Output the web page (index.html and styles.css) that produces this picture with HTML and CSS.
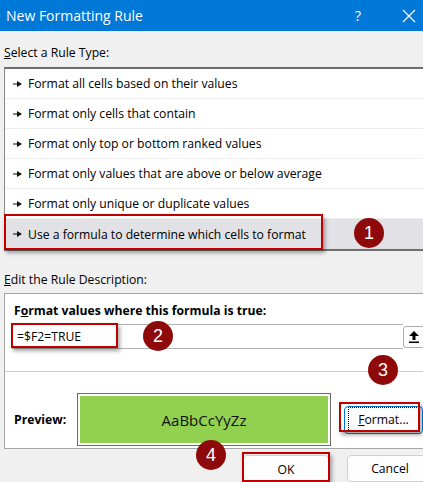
FILE: index.html
```html
<!DOCTYPE html>
<html>
<head>
<meta charset="utf-8">
<link rel="stylesheet" href="styles.css">
</head>
<body>
<div class="dialog">
  <div class="titlebar">
    <span class="title">New Formatting Rule</span>
    <span class="help">?</span>
    <svg class="close" width="14" height="14" viewBox="0 0 14 14"><path d="M1 1L13 13M13 1L1 13" stroke="#fff" stroke-width="1.2" fill="none"/></svg>
  </div>
  <div class="content">
    <div class="label"><u>S</u>elect a Rule Type:</div>
    <div class="listbox">
      <div class="row"><svg class="ptr" width="9" height="6" viewBox="0 0 9 6"><path d="M0 2.5H4V0L9 3L4 6V3.5H0Z" fill="#111"/></svg>Format all cells based on their values</div>
      <div class="row"><svg class="ptr" width="9" height="6" viewBox="0 0 9 6"><path d="M0 2.5H4V0L9 3L4 6V3.5H0Z" fill="#111"/></svg>Format only cells that contain</div>
      <div class="row"><svg class="ptr" width="9" height="6" viewBox="0 0 9 6"><path d="M0 2.5H4V0L9 3L4 6V3.5H0Z" fill="#111"/></svg>Format only top or bottom ranked values</div>
      <div class="row"><svg class="ptr" width="9" height="6" viewBox="0 0 9 6"><path d="M0 2.5H4V0L9 3L4 6V3.5H0Z" fill="#111"/></svg>Format only values that are above or below average</div>
      <div class="row"><svg class="ptr" width="9" height="6" viewBox="0 0 9 6"><path d="M0 2.5H4V0L9 3L4 6V3.5H0Z" fill="#111"/></svg>Format only unique or duplicate values</div>
      <div class="row selected"><svg class="ptr" width="9" height="6" viewBox="0 0 9 6"><path d="M0 2.5H4V0L9 3L4 6V3.5H0Z" fill="#111"/></svg>Use a formula to determine which cells to format</div>
    </div>
    <div class="label label2"><u>E</u>dit the Rule Description:</div>
    <div class="descbox">
      <div class="boldlabel">F<u>o</u>rmat values where this formula is true:</div>
      <div class="formula-row">
        <div class="formula">=$F2=TRUE</div>
        <div class="upbtn"><svg width="10" height="12" viewBox="0 0 10 12"><path d="M5 0L10 5H6.5V9H3.5V5H0Z" fill="#000"/><rect x="0" y="10.5" width="10" height="1.5" fill="#000"/></svg></div>
      </div>
      <div class="sep"></div>
      <div class="preview-row">
        <div class="boldlabel plabel">Preview:</div>
        <div class="preview"><div class="swatch">AaBbCcYyZz</div></div>
        <div class="btn fmtbtn"><span class="focus"><u>F</u>ormat...</span></div>
      </div>
    </div>
    <div class="buttons">
      <div class="btn okbtn">OK</div>
      <div class="btn cancelbtn">Cancel</div>
    </div>
  </div>

  <div class="mark box1"></div>
  <div class="mark box2"></div>
  <div class="mark box3"></div>
  <div class="mark box4"></div>
  <div class="num n1">1</div>
  <div class="num n2">2</div>
  <div class="num n3">3</div>
  <div class="num n4">4</div>
</div>
</body>
</html>
```

FILE: styles.css
```css
html, body {
  margin: 0;
  padding: 0;
  overflow: hidden;
  background: #f0f0f0;
}
body {
  width: 423px;
  height: 482px;
}
.dialog {
  position: relative;
  width: 440px;
  height: 482px;
  font-family: "Segoe UI", "Open Sans", "Noto Sans", sans-serif;
  font-size: 12.2px;
  color: #000;
}
.titlebar {
  height: 31px;
  background: #0078d7;
  color: #fff;
  display: flex;
  align-items: center;
  padding-left: 6px;
}
.title {
  font-size: 14px;
  flex: 0 0 auto;
  width: 349px;
}
.help {
  font-size: 14px;
  width: 47px;
}
.close {
  display: block;
}
.content {
  padding-left: 4px;
}
.label {
  height: 16px;
  line-height: 16px;
  margin-top: 14px;
  margin-bottom: 6px;
}
.label2 {
  margin-top: 21px;
  margin-bottom: 5px;
}
.listbox {
  background: #fff;
  border-top: 2px solid #6e6e6e;
  border-left: 1px solid #8a8a8a;
  border-bottom: 2px solid #6e6e6e;
}
.row {
  height: 29px;
  border-bottom: 1px solid #ededed;
  display: flex;
  align-items: center;
  padding-left: 8px;
}
.row.selected {
  height: 30px;
  border-bottom: none;
  background: #e1e1e6;
}
.ptr {
  margin-right: 6px;
  flex: 0 0 auto;
}
.descbox {
  background: #fff;
  border: 1px solid #a6a6a6;
  height: 154px;
}
.boldlabel {
  font-weight: bold;
  height: 16px;
  line-height: 16px;
  padding-left: 9px;
  margin-top: 9px;
}
.formula-row {
  display: flex;
  align-items: center;
  margin-left: 7px;
  margin-top: 5px;
  height: 25px;
}
.formula {
  width: 386px;
  height: 23px;
  line-height: 23px;
  border: 1px solid #b4b4b4;
  border-right: none;
  padding-left: 4px;
  box-sizing: content-box;
}
.upbtn {
  width: 26px;
  height: 22px;
  border: 1px solid #adadad;
  border-radius: 3px;
  background: #fdfdfd;
  display: flex;
  align-items: center;
  padding-left: 5px;
  box-sizing: border-box;
}
.sep {
  height: 1px;
  background: #cfcfcf;
  margin-top: 22px;
}
.preview-row {
  display: flex;
  align-items: center;
  margin-top: 21px;
}
.plabel {
  margin-top: 0;
  width: 63px;
  flex: 0 0 auto;
}
.preview {
  width: 248px;
  height: 47px;
  border: 1px solid #6a6a6a;
  padding: 2px;
  flex: 0 0 auto;
}
.swatch {
  width: 100%;
  height: 100%;
  background: #92d050;
  display: flex;
  align-items: center;
  justify-content: center;
  font-size: 15px;
  color: #111;
}
.btn {
  background: #fdfdfd;
  border: 1px solid #d0d0d0;
  border-radius: 4px;
  display: flex;
  align-items: center;
  justify-content: center;
  box-sizing: border-box;
}
.fmtbtn {
  margin-left: 13px;
  width: 79px;
  height: 28px;
  border-color: #0078d7;
}
.focus {
  border: 1px dotted #000;
  padding: 3px 9px;
}
.buttons {
  display: flex;
  padding-left: 239px;
  margin-top: 6px;
}
.okbtn {
  width: 86px;
  height: 28px;
}
.cancelbtn {
  margin-left: 18px;
  width: 86px;
  height: 27px;
}
.mark {
  position: absolute;
  border: 2px solid #c00000;
  box-shadow: 2px 3px 4px rgba(0, 0, 0, 0.35);
  box-sizing: border-box;
}
.box1 { left: 4px; top: 214px; width: 319px; height: 36px; }
.box2 { left: 11px; top: 323px; width: 107px; height: 25px; }
.box3 { left: 339px; top: 402px; width: 81px; height: 30px; }
.box4 { left: 242px; top: 452px; width: 88px; height: 30px; }
.num {
  position: absolute;
  width: 30px;
  height: 30px;
  border-radius: 50%;
  background: #8e0a0a;
  color: #fff;
  font-size: 18px;
  line-height: 30px;
  text-align: center;
  font-family: "Liberation Sans", Arial, sans-serif;
}
.n1 { left: 354px; top: 218px; }
.n2 { left: 143px; top: 321px; }
.n3 { left: 368px; top: 355px; }
.n4 { left: 196px; top: 440px; }
```
